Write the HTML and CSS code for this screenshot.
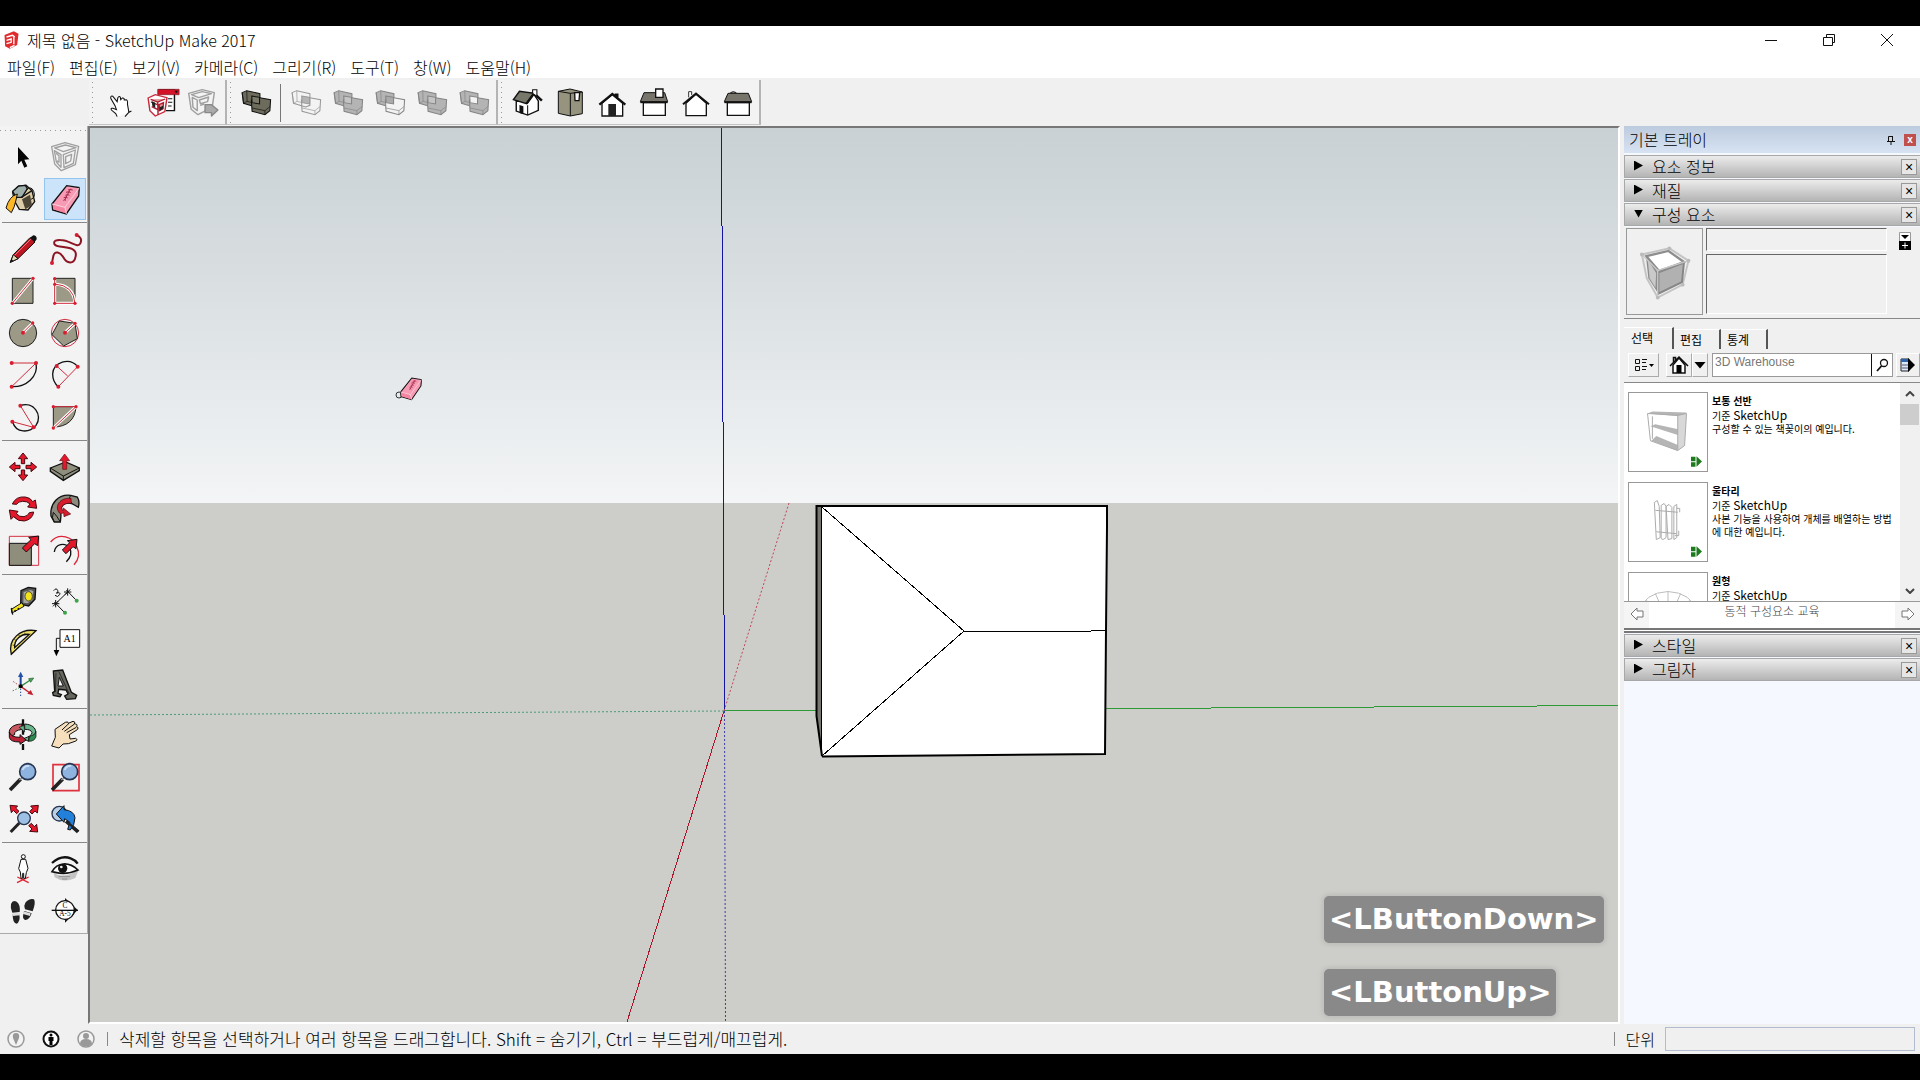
FILE: index.html
```html
<!DOCTYPE html>
<html lang="ko">
<head>
<meta charset="utf-8">
<title>제목 없음 - SketchUp Make 2017</title>
<link rel="stylesheet" href="styles.css">
</head>
<body>
<svg class="defs" width="0" height="0" aria-hidden="true">
  <symbol id="solids" viewBox="0 0 118 126" preserveAspectRatio="none">
    <path class="back" d="M20 32 33 26 70 35V70L58 75 24 64Z"/>
    <path class="edge" d="M20 32 24 64M33 26 34 58 24 64M34 58 48 62"/>
    <path class="front" d="M46 54 62 46 100 53 98 86 84 98 48 88Z"/>
    <path class="edge" d="M48 78 84 86 98 74M84 86V98"/>
    <path class="core" d="M47 42 69 46V66L48 62Z"/>
  </symbol>
  <symbol id="eraser" viewBox="150 190 94 96">
    <path d="M156 252 200 197 238 203 236 228 199 282 158 270Z" fill="#f79bb4" stroke="#111" stroke-width="4"/>
    <path d="M156 252 195 262 238 203M195 262 199 282" fill="none" stroke="#fbd3dd" stroke-width="3"/>
    <path d="M158 254 193 264 197 280 160 268Z" fill="#f4849f"/>
    <path d="M204 210q8-3 14 0M198 217q10-4 14 1M196 226q8-5 12 0M191 233q8-4 12 1M190 241q5-3 8 0M212 206l-18 34" fill="none" stroke="#a02848" stroke-width="3"/>
  </symbol>
  <symbol id="lens" viewBox="26 184 88 92">
    <path d="M30 270 62 237" stroke="#222" stroke-width="11"/>
    <path d="M58 240 68 231" stroke="#999" stroke-width="5"/>
    <circle cx="83" cy="215" r="24" fill="#8fb3df" stroke="#26344f" stroke-width="5"/>
    <path d="M68 210q5-14 20-12" fill="none" stroke="#cfe0f6" stroke-width="5"/>
  </symbol>
  <symbol id="insert" viewBox="0 0 32 32">
    <path d="M0 2h13v13H0zM0 18h13v13H0zM16 1 32 16 16 31Z" fill="#1e7a1e"/>
  </symbol>
</svg>

<header class="titlebar">
  <svg class="app-icon" viewBox="0 0 46 54"><path d="M2 12 30 1 44 8 40 42 18 53 4 46Z" fill="#e02a2c"/><path d="M8 18 26 13 33 18M30 18V40M8 28 22 24 22 34 8 38M18 50 32 43" fill="none" stroke="#fff" stroke-width="4"/></svg>
  <h1>제목 없음 - SketchUp Make 2017</h1>
  <div class="window-buttons">
    <button aria-label="최소화"><svg viewBox="0 0 14 14"><path d="M1 7.500h12"/></svg></button>
    <button aria-label="이전 크기로"><svg viewBox="0 0 14 14"><path d="M1.500 4.500h9v8h-9zM4.500 4V1.500h8v8H11"/></svg></button>
    <button aria-label="닫기"><svg viewBox="0 0 14 14"><path d="M1 1l12 12M13 1 1 13"/></svg></button>
  </div>
</header>

<nav class="menubar">
  <button>파일(F)</button><button>편집(E)</button><button>보기(V)</button><button>카메라(C)</button><button>그리기(R)</button><button>도구(T)</button><button>창(W)</button><button>도움말(H)</button>
</nav>

<div class="top-tools">
  <div class="bar">
    <button class="tool" aria-label="상호 작용"><svg viewBox="277 186 118 126" preserveAspectRatio="none"><path d="M328 290 324 281 312 270q-3-7 4-5l10 4-4-12-12-22q-1-9 6-6l12 16 2-12q4-6 7-1l1 7 5-5q5-1 5 6l6-1q4 2 3 14l4 24M350 290l10-12 8-5" fill="#fff" stroke="#111" stroke-width="3"/></svg></button>
    <button class="tool" aria-label="구성요소 옵션"><svg viewBox="394 186 118 126" preserveAspectRatio="none"><path d="M444 210h44v62h-24" fill="#fff" stroke="#111" stroke-width="4"/><path d="M470 236h12M470 247h12M470 258h10" stroke="#111" stroke-width="3"/><path d="M441 208h60v16h-60z" fill="#d41228" stroke="#7d1522" stroke-width="2"/><path d="M488 212h10l-5 8z" fill="#111"/><path d="M414 234 434 224 467 233 461 275 434 288 419 272Z" fill="#fff" stroke="#c8283a" stroke-width="4"/><path d="M421 238 441 246 462 237M441 246l1 38M422 246l18 8M424 260l16 8M445 254l12-6-1 18-10 6z" fill="#d99" stroke="#b01c30" stroke-width="4"/><path d="M424 243l10 5v16l-8-5zM446 262l10-5v10l-9 5z" fill="#222"/></svg></button>
    <button class="tool" aria-label="구성요소 속성"><svg class="gray" viewBox="512 186 118 126" preserveAspectRatio="none"><path d="M528 220 566 209 600 218 594 262 554 284 535 268Z"/><path d="M536 224 556 233 592 221 566 215ZM538 232l14 8v32l-12-10zM558 240l26-9-3 14-20 6zM560 256l12-4"/><path class="solid" d="M574 254h18l18 16-18 18v-10h-18z"/></svg></button>
  </div>
  <div class="bar solid-bar">
    <button class="tool" aria-label="외부 쉘"><svg class="solids shell"><use href="#solids"/></svg></button>
    <span class="rule"></span>
    <button class="tool" aria-label="교차"><svg class="solids hollow"><use href="#solids"/></svg></button>
    <button class="tool" aria-label="결합"><svg class="solids"><use href="#solids"/></svg></button>
    <button class="tool" aria-label="빼기"><svg class="solids cut"><use href="#solids"/></svg></button>
    <button class="tool" aria-label="잘라내기"><svg class="solids"><use href="#solids"/></svg></button>
    <button class="tool" aria-label="분할"><svg class="solids split"><use href="#solids"/></svg></button>
  </div>
  <div class="bar">
    <button class="tool" aria-label="등각"><svg viewBox="1420 186 118 126" preserveAspectRatio="none"><path d="M1446 243v30l32 12 30-14v-28l-16-26-18 28Z" fill="#fff" stroke="#111" stroke-width="4"/><path d="M1438 239 1455 214 1496 220 1475 251Z" fill="#77776a" stroke="#111" stroke-width="4"/><path d="M1475 251 1496 220 1518 242" fill="none" stroke="#111" stroke-width="7"/><path d="M1455 279v-24l11 4v24z" fill="#111"/><path d="M1492 209h12v20l-12-9z" fill="#fff" stroke="#111" stroke-width="3"/><path d="M1478 256v29" stroke="#111" stroke-width="3"/></svg></button>
    <button class="tool" aria-label="위"><svg viewBox="27 36 126 126"><path d="M55 64 90 57 127 66V131L91 138 55 130Z" fill="#96937e" stroke="#111" stroke-width="3"/><path d="M55 64 91 70 127 66M91 70V138" fill="none" stroke="#111" stroke-width="3"/><path d="M104 68h15l-2 24h-12z" fill="#fff" stroke="#111" stroke-width="4"/></svg></button>
    <button class="tool" aria-label="앞면"><svg viewBox="153 36 126 126"><path d="M186 100V138H248V100L217 73Z" fill="#fff" stroke="#111" stroke-width="4"/><path d="M178 104 217 72 256 104M224 74h8v8" fill="none" stroke="#111" stroke-width="7"/><path d="M205 102h23v36h-23z" fill="#222"/></svg></button>
    <button class="tool" aria-label="오른쪽"><svg viewBox="279 36 126 126"><path d="M310 98h66v38h-66z" fill="#fff" stroke="#111" stroke-width="4"/><path d="M301 95 312 68H374L383 95Z" fill="#77746b" stroke="#111" stroke-width="3"/><path d="M301 97h82" stroke="#111" stroke-width="5"/><path d="M347 57h22v25h-22z" fill="#fff" stroke="#111" stroke-width="4"/></svg></button>
    <button class="tool" aria-label="뒷면"><svg viewBox="405 36 126 126"><path d="M446 82V65h9v10" fill="#fff" stroke="#333" stroke-width="3"/><path d="M438 100V137H499V100L468 72Z" fill="#fff" stroke="#111" stroke-width="4"/><path d="M429 103 468 71 507 103" fill="none" stroke="#111" stroke-width="6"/></svg></button>
    <button class="tool" aria-label="왼쪽"><svg viewBox="531 36 126 126"><path d="M571 68q9-6 18 0" fill="#777" stroke="#222" stroke-width="3"/><path d="M562 98h66v38h-66z" fill="#fff" stroke="#111" stroke-width="4"/><path d="M553 95 564 70H625L635 95Z" fill="#77746b" stroke="#111" stroke-width="3"/><path d="M553 97h82" stroke="#111" stroke-width="5"/></svg></button>
  </div>
</div>

<main class="workspace">
  <aside class="side-tools">
    <div class="palette">
      <div class="group">
        <button class="tool" aria-label="선택"><svg viewBox="6 48 126 126"><path d="M54 81V133L64 122 73 143 82 139 73 119 88 118Z" fill="#050505"/></svg></button>
        <button class="tool" aria-label="구성요소 만들기"><svg class="gray" viewBox="132 48 126 126"><path d="M155 80 195 68 236 79 226 134 184 152 164 132Z"/><path d="M164 84 190 95 228 83 196 75ZM163 92l20 12v38l-14-16zM190 104l36-14-6 40-28 13zM197 110l18-7-3 20-15 8zM168 100l9 7v20l-6-5"/></svg></button>
        <button class="tool" aria-label="페인트통"><svg viewBox="6 174 126 126"><path d="M38 218 54 200 78 196 96 212 104 245 84 270 58 268 44 244Z" fill="#dccda8" stroke="#111" stroke-width="4"/><path d="M66 238 76 268 96 256 90 224Z" fill="#4c4435"/><path d="M38 214 56 198 76 196 82 206 66 232 48 232Z" fill="#9fb0ac" stroke="#111" stroke-width="4"/><path d="M64 232 96 212" stroke="#111" stroke-width="4"/><path d="M78 210q16-14 23 4t-8 24" fill="none" stroke="#111" stroke-width="3"/><path d="M52 222Q28 228 18 264L34 278Q44 262 48 240Z" fill="#fdb827" stroke="#111" stroke-width="3"/></svg></button>
        <button class="tool active" aria-label="지우개"><svg viewBox="132 174 126 126"><use href="#eraser" x="150" y="190" width="94" height="96"/></svg></button>
      </div>
      <div class="group">
        <button class="tool" aria-label="선"><svg viewBox="6 324 126 126"><path d="M31 427 40 404 90 353 105 366 54 416Z" fill="#be1622" stroke="#111" stroke-width="3"/><path d="M31 427 40 404 54 416Z" fill="#e6d6b4" stroke="#111" stroke-width="3"/><path d="M31 427l3-10 6 5zM90 353l10-7q11 1 10 12l-6 8z" fill="#111"/><path d="M44 406 92 358" stroke="#f0787d" stroke-width="3"/></svg></button>
        <button class="tool" aria-label="자유형"><svg class="red-dots" viewBox="132 324 126 126"><path d="M229 345q20 8 12 25c-8 17-30-10-60-10-26-1-22 16-5 19 22 3 57 3 51 30-5 26-27 22-37 3-9-15-26-22-30-4l-4 20" fill="none" stroke="#8d1523" stroke-width="6"/><circle cx="230" cy="345" r="6"/><circle cx="156" cy="429" r="6"/></svg></button>
        <button class="tool" aria-label="직사각형"><svg class="red-dots" viewBox="6 450 126 126"><path class="face" d="M37 475h62v75H37z"/><path class="white-line" d="M37 550 99 475"/><path class="red-line" d="M37 550 99 475"/><circle cx="99" cy="475" r="5"/><circle cx="37" cy="550" r="5"/></svg></button>
        <button class="tool" aria-label="회전 직사각형"><svg class="red-dots" viewBox="132 450 126 126"><path class="face" d="M164 475h61v75h-61z"/><path class="white-line" d="M164 478v72h61q-4-54-61-58"/><path class="red-line" d="M164 478v72h61q-4-54-61-58"/><circle cx="164" cy="476" r="5"/><circle cx="164" cy="493" r="5"/><circle cx="164" cy="550" r="5"/><circle cx="225" cy="550" r="5"/></svg></button>
        <button class="tool" aria-label="원"><svg class="red-dots" viewBox="6 576 126 126"><circle class="disc" cx="69" cy="639" r="41"/><path class="white-line" d="M69 638 98 609"/><path class="red-line" d="M69 638 98 609"/><circle cx="69" cy="638" r="6"/><circle cx="98" cy="609" r="5"/></svg></button>
        <button class="tool" aria-label="다각형"><svg class="red-dots" viewBox="132 576 126 126"><circle class="red-ring" cx="195" cy="639" r="41"/><path class="face" d="M178 603 225 610 232 656 191 678 156 644Z"/><path class="white-line" d="M195 638 225 610"/><path class="red-line" d="M195 638 225 610"/><circle cx="195" cy="638" r="6"/><circle cx="225" cy="610" r="5"/></svg></button>
        <button class="tool" aria-label="호"><svg class="red-dots" viewBox="6 702 126 126"><path class="arc" d="M108 729C116 770 78 802 35 800"/><path class="red-line" d="M35 729H108L35 800"/><circle cx="35" cy="729" r="6"/><circle cx="108" cy="729" r="6"/><circle cx="35" cy="800" r="6"/></svg></button>
        <button class="tool" aria-label="2점 호"><svg class="red-dots" viewBox="132 702 126 126"><path class="arc" d="M233 740C208 710 160 727 158 762Q158 786 175 800"/><path class="red-line" d="M175 800 233 740M170 738 203 768"/><circle cx="233" cy="740" r="6"/><circle cx="170" cy="738" r="6"/><circle cx="175" cy="800" r="6"/></svg></button>
        <button class="tool" aria-label="3점 호"><svg class="red-dots" viewBox="6 828 126 126"><path class="arc" d="M61 857C100 842 130 886 108 916C88 940 48 940 38 906"/><path class="red-line" d="M61 857 101 922 37 905"/><circle cx="61" cy="857" r="6"/><circle cx="101" cy="922" r="6"/><circle cx="37" cy="905" r="6"/></svg></button>
        <button class="tool" aria-label="원형 차트"><svg class="red-dots" viewBox="132 828 126 126"><path class="face" d="M160 860H228C226 900 200 921 160 921Z"/><path class="white-line" d="M160 924 228 860"/><path class="red-line" d="M160 860H228L160 924"/><circle cx="160" cy="860" r="5"/><circle cx="228" cy="860" r="5"/><circle cx="160" cy="924" r="5"/></svg></button>
      </div>
      <div class="group">
        <button class="tool" aria-label="이동"><svg class="red-solid" viewBox="6 48 126 126"><path d="M69 69 83 86H74V101H64V86H55ZM69 152 83 135H74V120H64V135H55ZM28 111 45 97V106H60V116H45V125ZM110 111 93 97V106H78V116H93V125Z"/></svg></button>
        <button class="tool" aria-label="밀기/끌기"><svg viewBox="132 48 126 126"><path d="M151 114 197 96 238 114V122L190 151 151 124Z" fill="#8f8e7c" stroke="#111" stroke-width="4"/><path d="M151 114 190 138 238 114M190 138v13" fill="none" stroke="#111" stroke-width="3"/><path d="M194 72 209 92H200V118H188V92H179Z" fill="#e5182b" stroke="#5e1018" stroke-width="2"/></svg></button>
        <button class="tool" aria-label="회전"><svg class="red-solid" viewBox="6 174 126 126"><path d="M37 222Q48 198 76 201 92 203 98 215L106 210 110 235 83 231 90 222Q82 213 68 214 54 214 50 223ZM101 246Q98 268 73 273 54 275 41 260L33 268 28 240 54 244 49 251Q58 262 72 260 84 258 88 248Z"/></svg></button>
        <button class="tool" aria-label="따라가기"><svg viewBox="132 174 126 126"><path d="M153 258C149 219 176 192 212 196L232 201Q240 214 235 232L218 222C192 212 176 230 183 256L181 276 163 276Z" fill="#8b8a7d" stroke="#111" stroke-width="4"/><path d="M163 276Q153 264 160 247 170 256 181 276M212 196q-10 14 6 26" fill="none" stroke="#111" stroke-width="3"/><path d="M213 205C172 202 162 238 182 252L191 248 192 260 212 252 190 234 188 242C178 226 198 218 214 220Z" fill="#d51d2d" stroke="#4a0c12" stroke-width="2"/></svg></button>
        <button class="tool" aria-label="배율"><svg viewBox="6 300 126 126"><path d="M28 319h88v87H28z" fill="none" stroke="#d43243" stroke-width="3"/><path d="M28 340h66v66H28z" fill="#8f8e7c" stroke="#111" stroke-width="3"/><path d="M116 318 113 347 104 341 79 366 67 354 93 329 86 322Z" fill="#e5182b" stroke="#111" stroke-width="3"/></svg></button>
        <button class="tool" aria-label="오프셋"><svg viewBox="132 300 126 126"><path d="M152 336C177 306 220 320 230 350Q245 380 222 404" fill="none" stroke="#dc2436" stroke-width="4"/><path d="M163 366C166 341 195 336 209 354Q220 374 199 395" fill="none" stroke="#111" stroke-width="4"/><path d="M231 328 228 356 219 350 198 371 187 360 209 338 202 332Z" fill="#e5182b" stroke="#111" stroke-width="3"/></svg></button>
      </div>
      <div class="group">
        <button class="tool" aria-label="줄자"><svg viewBox="6 450 126 126"><path d="M63 482 85 472 107 475 105 508 86 528 62 523Z" fill="#555" stroke="#111" stroke-width="4"/><path d="M71 486 92 480 100 484 97 510 82 520 70 518Z" fill="#a8a8a0"/><ellipse cx="86" cy="499" rx="11" ry="14" fill="#f4e21c" stroke="#111" stroke-width="2"/><path d="M66 518 34 538 36 549 72 529Z" fill="#f4e21c" stroke="#111" stroke-width="3"/><path d="M34 534l4 20M44 540l3 5M54 534l3 5" stroke="#111" stroke-width="4"/></svg></button>
        <button class="tool" aria-label="치수"><svg viewBox="132 450 126 126"><path d="M167 521 203 486M163 516 194 548M199 480 230 512M156 521h22M192 486h22M167 510v22M203 475v22M159 529l16-16M195 494l16-16" fill="none" stroke="#111" stroke-width="3"/><path d="M161 482q8-10 12-1t-4 8q14-3 10 5-6 10-14 2" fill="none" stroke="#111" stroke-width="3"/><circle cx="230" cy="512" r="6" fill="#3fa34a"/><circle cx="195" cy="548" r="6" fill="#3fa34a"/></svg></button>
        <button class="tool" aria-label="각도기"><svg viewBox="6 576 126 126"><path fill-rule="evenodd" d="M34 673C22 628 62 594 108 602ZM44 653C42 628 64 610 88 613Z" fill="#f0df6a" stroke="#111" stroke-width="4"/><path d="M38 645l8 2M43 628l8 5M56 615l5 6M74 608l2 6M34 673 60 646" stroke="#111" stroke-width="2"/></svg></button>
        <button class="tool" aria-label="텍스트"><svg viewBox="132 576 126 126"><path d="M180 599h59v53h-59z" fill="#fff" stroke="#111" stroke-width="3"/><path d="M180 625H169V662" fill="none" stroke="#111" stroke-width="3"/><path d="M161 660h17l-9 19z"/><text class="serif-label" x="209" y="635">A1</text></svg></button>
        <button class="tool" aria-label="축"><svg viewBox="6 702 126 126"><path d="M62 769 91 750" stroke="#2f8b3e" stroke-width="4"/><path d="M101 744 86 746 92 757Z" fill="#49a355" stroke="#1e5c29" stroke-width="2"/><path d="M62 769V739" stroke="#1e4699" stroke-width="6"/><path d="M62 725 54 741H70Z" fill="#2453ae"/><path d="M62 769 90 789" stroke="#c2202f" stroke-width="4"/><path d="M100 796 82 791 92 780Z" fill="#c2202f"/><path d="M58 767 36 752" stroke="#a23a48" stroke-width="3" stroke-dasharray="4 5"/><path d="M58 773 35 784" stroke="#3c8449" stroke-width="3" stroke-dasharray="4 5"/><path d="M62 776V802" stroke="#1e4699" stroke-width="3" stroke-dasharray="4 5"/><circle cx="62" cy="769" r="6"/></svg></button>
        <button class="tool" aria-label="3D 텍스트"><svg viewBox="132 702 126 126"><path d="M160 723 188 720 214 787 230 796 226 806 200 808 194 798 204 792 198 780 176 778 174 790 184 794 180 800 160 796 158 788 164 784Z" fill="#66685f" stroke="#111" stroke-width="4"/><path d="M178 742 190 768H174Z" fill="#f3f3f3" stroke="#111" stroke-width="3"/><path d="M176 724 208 792M168 728 166 786" stroke="#111" stroke-width="2"/></svg></button>
      </div>
      <div class="group">
        <button class="tool" aria-label="궤도"><svg viewBox="6 42 126 126"><path d="M66 72C34 72 20 92 32 108L44 104Q40 92 66 88Z" fill="#c75860" stroke="#111" stroke-width="3"/><path d="M74 72C112 74 118 106 86 112V124L70 116Q96 108 96 98 94 88 74 88Z" fill="#68b48b" stroke="#111" stroke-width="3"/><path d="M28 96Q32 112 60 112V104L78 120 60 133V126Q30 126 28 112Z" fill="#ba2237" stroke="#111" stroke-width="3"/><path d="M90 108q16-2 18-14v16q-4 14-22 14z" fill="#2d8a50" stroke="#111" stroke-width="2"/><path d="M69 58V104M69 132V150" stroke="#111" stroke-width="7"/><path d="M58 82 72 76 74 96Z" fill="#68b48b" stroke="#111" stroke-width="2"/></svg></button>
        <button class="tool" aria-label="이동 보기"><svg viewBox="132 42 126 126"><path d="M155 138 166 112 165 88 196 67q9-4 9 3l14-6q9 1 4 8 11-1 7 8 8 2 2 9L208 104l2 13 17-2q9 5-2 9l-20 7-16 1-12 12Z" fill="#f6dfbd" stroke="#111" stroke-width="3"/><path d="M186 90 207 70M193 94 222 73M200 98 229 82" fill="none" stroke="#111" stroke-width="3"/></svg></button>
        <button class="tool" aria-label="확대/축소"><svg viewBox="6 168 126 126"><use href="#lens" x="26" y="184" width="88" height="92"/></svg></button>
        <button class="tool" aria-label="확대/축소 창"><svg viewBox="132 168 126 126"><path d="M159 194h78v78h-78z" fill="none" stroke="#e0313f" stroke-width="5"/><use href="#lens" x="152" y="184" width="88" height="92"/></svg></button>
        <button class="tool" aria-label="범위 확대/축소"><svg viewBox="6 294 126 126"><g class="red-solid"><path d="M30 316 53 318 47 324 57 334 50 341 40 331 34 338ZM115 316 112 339 105 333 96 342 89 335 98 325 92 318ZM113 396 89 394 96 387 86 377 94 370 103 380 110 373Z"/></g><path d="M32 396 58 369" stroke="#222" stroke-width="9"/><circle cx="72" cy="355" r="19" fill="#9dc0e4" stroke="#26344f" stroke-width="4"/></svg></button>
        <button class="tool" aria-label="이전 보기"><svg viewBox="132 294 126 126"><circle cx="178" cy="341" r="22" fill="#b9cfe6" stroke="#26344f" stroke-width="4"/><path d="M198 364 234 396" stroke="#222" stroke-width="10"/><path d="M169 342 192 317V329Q222 332 225 353 224 376 211 390L203 388 210 367 194 356 192 367Z" fill="#2380da" stroke="#111" stroke-width="3"/><path d="M206 370 236 394" stroke="#222" stroke-width="7"/></svg></button>
      </div>
      <div class="group">
        <button class="tool" aria-label="카메라 배치"><svg viewBox="6 444 126 126"><path d="M51 548 86 531M52 531 86 548" stroke="#e0202d" stroke-width="4"/><circle cx="70" cy="470" r="6" fill="#fff" stroke="#111" stroke-width="3"/><path d="M63 478H77L84 505 79 518 76 535H71V520H68V535H63L61 516 56 506Z" fill="#fff" stroke="#111" stroke-width="3"/></svg></button>
        <button class="tool" aria-label="둘러보기"><svg viewBox="132 444 126 126"><path d="M160 516Q184 540 236 510L226 534Q190 550 164 532Z" fill="#c4c4c4"/><path d="M156 489Q184 464 212 475 226 480 233 491" fill="none" stroke="#111" stroke-width="7"/><path d="M156 515C172 486 206 484 234 510Q198 526 166 517Z" fill="#fff" stroke="#111" stroke-width="5"/><circle cx="188" cy="505" r="14" fill="#111"/><circle cx="184" cy="501" r="4" fill="#eee"/><path d="M176 530h34M186 537h16" stroke="#777" stroke-width="2"/></svg></button>
        <button class="tool" aria-label="걸어다니기"><svg viewBox="6 570 126 126"><path d="M33 612Q38 598 50 605 62 614 59 636L37 638Q30 626 33 612ZM38 643 58 641Q62 666 49 671 38 670 38 643ZM76 608Q88 594 102 598 108 608 98 634L75 628Q70 618 76 608ZM73 633 95 640Q88 661 75 660 64 654 73 633Z" fill="#222"/><path d="M38 640 60 638 60 646 38 648ZM70 634 92 640 90 648 69 642Z" fill="#ddd"/></svg></button>
        <button class="tool" aria-label="단면 평면"><svg viewBox="132 570 126 126"><path d="M195 594 233 630 195 668Z" fill="#111"/><circle cx="195" cy="630" r="28" fill="#fff" stroke="#111" stroke-width="4"/><path d="M155 631H234" stroke="#111" stroke-width="4"/><text class="serif-label small" x="195" y="625">C</text><text class="serif-label small" x="195" y="649">A-5</text></svg></button>
      </div>
    </div>
  </aside>

  <section class="viewport">
    <svg class="scene" viewBox="90 128 1528 894" preserveAspectRatio="xMidYMid slice">
      <defs><linearGradient id="sky" x1="0" y1="0" x2="0" y2="1"><stop offset="0" stop-color="#c9d1d4"/><stop offset=".5" stop-color="#dde2e4"/><stop offset="1" stop-color="#f3f5f6"/></linearGradient></defs>
      <path d="M90 128h1528v375H90z" fill="url(#sky)"/>
      <path d="M90 503h1528v519H90z" fill="#cdcec9"/>
      <g class="axes">
        <path d="M721.500 128 724.500 711" stroke="#1414a0"/>
        <path d="M724 711 627 1022" stroke="#b01428"/>
        <path d="M724 711 1618 705.500" stroke="#2e9a36"/>
      </g>
      <g class="dotted-axes">
        <path d="M724.500 711 725.500 1022" stroke="#3c3ca8"/>
        <path d="M724 711 789 503" stroke="#c04656"/>
        <path d="M724 711 90 715" stroke="#4c9a80"/>
      </g>
      <path d="M817 506H1107L1105 754 822 756.500 816 716Z" fill="#fff"/>
      <path d="M817 506h5v248l-6-38z" fill="#77776f"/>
      <g fill="none" stroke="#000">
        <path d="M822 756 816.500 716V506H1107V527L1106 630 1105 754 822 756.500" stroke-width="2"/>
        <path class="crisp" d="M821.500 506V756M822 507 964 631 822 756M964 631.500 1078 631.500 1105 630.500"/>
      </g>
      <circle cx="399" cy="395" r="3" fill="none" stroke="#333"/>
      <use href="#eraser" x="399" y="376" width="24" height="25"/>
    </svg>
    <div class="keys"><kbd>&lt;LButtonDown&gt;</kbd><kbd>&lt;LButtonUp&gt;</kbd></div>
  </section>

  <aside class="tray">
    <div class="tray-title"><h2>기본 트레이</h2>
      <button class="pin" aria-label="고정"><svg viewBox="0 0 8 10"><path d="M1.500 6V1.500h4V6M0 6.500h8M4 6v4M5.500 1v5.500" fill="none" stroke="#111"/></svg></button>
      <button class="shut" aria-label="트레이 닫기">x</button></div>
    <div class="panel-head"><button class="fold"><i class="tri"></i>요소 정보</button><button class="x" aria-label="닫기">×</button></div>
    <div class="panel-head"><button class="fold"><i class="tri"></i>재질</button><button class="x" aria-label="닫기">×</button></div>
    <div class="panel-head"><button class="fold"><i class="tri open"></i>구성 요소</button><button class="x" aria-label="닫기">×</button></div>
    <div class="component">
      <div class="preview"><svg viewBox="80 395 170 175"><path d="M92 427 177 408 236 446 218 520 141 560 107 500Z" fill="#eee" stroke="#c4c4c4" stroke-width="6"/><path d="M104 428 143 484 143 548 112 500Z" fill="#8d8d8d"/><path d="M110 442 136 484 134 530 116 500Z" fill="#c9c9c9"/><path d="M143 482 222 452 216 512 143 548Z" fill="#b1b1b1" stroke="#858585" stroke-width="6"/><path d="M106 432 174 416 222 450 145 478Z" fill="#fff" stroke="#8d8d8d" stroke-width="7"/><path d="M92 427 141 476 236 446M141 476V560" fill="none" stroke="#c9c9c9" stroke-width="4"/><g fill="#bbb"><circle cx="92" cy="427" r="6"/><circle cx="177" cy="408" r="6"/><circle cx="236" cy="446" r="6"/><circle cx="218" cy="520" r="6"/><circle cx="141" cy="560" r="6"/></g></svg></div>
      <div class="fields"><input type="text" aria-label="이름"><textarea aria-label="설명"></textarea></div>
      <button class="more" aria-label="보조 선택 창"><svg viewBox="0 0 12 18"><path d="M.5.5h11v9H.5z" fill="#fff" stroke="#999"/><path d="M2 3h8L6 7z"/><path d="M0 9h12v9H0z"/><path d="M3 13.500h6M6 10.500v6" stroke="#fff"/></svg></button>
    </div>
    <div class="tabs"><button class="on">선택</button><button>편집</button><button>통계</button></div>
    <div class="search">
      <button class="raised view" aria-label="보기 옵션"><svg viewBox="0 0 20 16"><path d="M1.500 2.500h4v4h-4zM1.500 9.500h4v4h-4zM8 2.500h5M8 5.500h4M8 9.500h5M8 12.500h4" fill="none" stroke="#111"/><path d="M15 7h5l-2.500 3z"/></svg></button>
      <button class="raised home" aria-label="모델에서"><svg viewBox="0 0 20 20"><path d="M4 10v8h12v-8L10 3z" fill="#fff" stroke="#111" stroke-width="1.500"/><path d="M1 11 10 2l9 9M4.500 7V2.500h2V5" fill="none" stroke="#111" stroke-width="1.500"/><path d="M7.500 10h5v8h-5z"/></svg></button>
      <button class="raised drop" aria-label="탐색"><i class="tri open"></i></button>
      <div class="search-box"><input type="text" placeholder="3D Warehouse" aria-label="검색"><button aria-label="찾기"><svg viewBox="0 0 14 14"><circle cx="9" cy="5" r="3.500" fill="none" stroke="#111" stroke-width="1.300"/><path d="M6.500 8 2 13" stroke="#111" stroke-width="1.800"/></svg></button></div>
      <button class="raised detail" aria-label="세부 정보"><svg viewBox="0 0 16 16"><path d="M1 2h8v12H1z" fill="#dce8f6" stroke="#222"/><path d="M1 2h8v3H1z" fill="#2d65b0"/><path d="M2 8h6M2 11h6" stroke="#557"/><path d="M8 1 15 8 8 15z"/></svg></button>
    </div>
    <div class="list">
      <ul>
        <li><div class="thumb"><svg viewBox="0 0 80 80"><path d="M19 21 24 19 59 20 56 24ZM22 34 27 32 54 38 50 43ZM23 49 28 44 52 54 49 59Z" fill="#b5b5b5"/><path d="M50 23 59 21 57 54 50 59Z" fill="#d8d8d8"/><path d="M19 21 50 23 50 59 22 49ZM50 23 59 21 57 54 50 59M24 24V47" fill="none" stroke="#aaa"/></svg><svg class="dyn"><use href="#insert"/></svg></div><div><h3>보통 선반</h3><p>기준 <span>SketchUp</span></p><p>구성할 수 있는 책꽂이의 예입니다.</p></div></li>
        <li><div class="thumb"><svg viewBox="0 0 80 80"><path d="M28 58 26 20 29 18 31 24 32 56 28 58M33 57V23l3-2 2 3v32l-3 2zM40 58 38 24l3-2 3 3v32zM46 58V24l3-2v34l-3 2M27 28l23 2M28 50l21 2M47 54h4v-5M49 26h3v4" fill="none" stroke="#aaa"/></svg><svg class="dyn"><use href="#insert"/></svg></div><div><h3>울타리</h3><p>기준 <span>SketchUp</span></p><p>사본 기능을 사용하여 개체를 배열하는 방법에 대한 예입니다.</p></div></li>
        <li><div class="thumb"><svg viewBox="0 0 80 80"><path d="M10 40Q16 20 40 19 64 20 70 40M40 19V40M27 21 40 50 53 21M18 28 40 50 62 28" fill="none" stroke="#bbb"/></svg></div><div><h3>원형</h3><p>기준 <span>SketchUp</span></p></div></li>
      </ul>
      <div class="scroll"><button aria-label="위로"><svg viewBox="0 0 10 6"><path d="M1 5 5 1l4 4"/></svg></button><i class="grab"></i><button class="down" aria-label="아래로"><svg viewBox="0 0 10 6"><path d="M1 1l4 4 4-4"/></svg></button></div>
    </div>
    <div class="pager"><button aria-label="이전"><svg viewBox="0 0 14 14"><path d="M1 7 7 1v3h6v6H7v3z"/></svg></button><a href="#">동적 구성요소 교육</a><button aria-label="다음"><svg viewBox="0 0 14 14"><path d="M13 7 7 1v3H1v6h6v3z"/></svg></button></div>
    <div class="panel-head"><button class="fold"><i class="tri"></i>스타일</button><button class="x" aria-label="닫기">×</button></div>
    <div class="panel-head"><button class="fold"><i class="tri"></i>그림자</button><button class="x" aria-label="닫기">×</button></div>
  </aside>
</main>

<footer class="status">
  <button aria-label="위치"><svg viewBox="0 0 18 18"><circle cx="9" cy="9" r="8" fill="#f3f3f3" stroke="#999" stroke-width="1.500"/><path d="M9 15 6 8q-1-5 3-5t3 5z" fill="#999"/></svg></button>
  <button aria-label="크레딧"><svg viewBox="0 0 18 18"><circle cx="9" cy="9" r="7.500" fill="#fff" stroke="#111" stroke-width="2"/><circle cx="9" cy="5" r="1.500"/><path d="M6.500 7h5v4H10.500v4h-3v-4h-1z"/></svg></button>
  <button aria-label="로그인"><svg viewBox="0 0 18 18"><circle cx="9" cy="9" r="8" fill="#f3f3f3" stroke="#999" stroke-width="1.500"/><circle cx="9" cy="6" r="3" fill="#999"/><path d="M3 14q0-5 6-5t6 5q-6 5-12 0" fill="#999"/></svg></button>
  <i class="bar-line"></i>
  <p>삭제할 항목을 선택하거나 여러 항목을 드래그합니다. Shift = 숨기기, Ctrl = 부드럽게/매끄럽게.</p>
  <i class="bar-line"></i>
  <label for="units">단위</label><input id="units" type="text">
</footer>
</body>
</html>
```
FILE: styles.css
```css
* { box-sizing: border-box; margin: 0; padding: 0; }
body { display: flex; flex-direction: column; min-height: 100vh; padding: 26px 0; background: #000; color: #000; font: 300 16px/20px "Noto Sans CJK KR", sans-serif; }
button { border: 0; background: none; color: inherit; font: inherit; display: flex; align-items: center; justify-content: center; }
input, textarea { border: 0; background: none; font: inherit; min-width: 0; border-radius: 0; resize: none; }
.defs { position: absolute; }
h1, h2, h3 { font-weight: 300; font-size: 16px; }

.titlebar { display: flex; align-items: center; gap: 7px; height: 28px; padding: 0 4px 0 3px; background: #fff; }
.app-icon { width: 17px; height: 18px; }
.titlebar h1 { flex: 1; }
.window-buttons { display: flex; }
.window-buttons button { width: 58px; height: 28px; }
.window-buttons svg { width: 14px; height: 14px; fill: none; stroke: #111; }
.menubar { display: flex; gap: 14px; height: 24px; padding: 2px 7px 0; background: #fff; }

.top-tools { display: flex; height: 48px; padding: 2px 0 0 89px; background: #f0f0f0; }
.bar { display: flex; align-items: center; height: 45px; padding: 2px 0 0 10px; background: #f3f3f3 radial-gradient(circle, #999 1px, transparent 1px) 2px 0 / 3px 5px repeat-y; border-right: 2px solid #b4b4b4; border-bottom: 1px solid #c4c4c4; }
.bar + .bar { padding-left: 9px; }
.bar.solid-bar { padding-left: 8px; padding-right: 1px; }
.rule { width: 1px; height: 38px; margin: 0 4px 0 3px; background: #777; }
.tool { width: 42px; height: 42px; flex: none; }
.tool svg { width: 42px; height: 42px; display: block; }
.tool.active { background: #cbe4f9; border: 1px solid #94c5ef; }
.tool.active svg { margin: -1px; }

.gray path { fill: none; stroke: #a0a0a0; stroke-width: 4px; stroke-linejoin: round; }
.gray path.solid { fill: #aaa; stroke: #888; }
.solids { --fill: #b4b4b4; --line: #858585; --front: var(--fill); --core: #c4c4c4; }
.solids.shell { --fill: #6c6b5c; --line: #111; --core: #7b7a6a; }
.solids.hollow { --fill: none; --core: #b4b4b4; --line: #999; }
.solids.cut { --front: #f3f3f3; --core: #aaa; }
.solids.split { --core: #f3f3f3; }
.back { fill: var(--fill); stroke: var(--line); stroke-width: 3px; }
.front { fill: var(--front); stroke: var(--line); stroke-width: 3px; }
.core { fill: var(--core); stroke: var(--line); stroke-width: 3px; }
.edge { fill: none; stroke: var(--line); stroke-width: 2px; }
.red-dots circle { fill: #d81d30; }
.red-dots .face, .red-dots .disc { fill: #9c9a86; stroke: #222; stroke-width: 3px; }
.red-dots .red-ring { fill: none; stroke: #d22d3c; stroke-width: 3px; }
.white-line { fill: none; stroke: #fff; stroke-width: 9px; }
.red-line { fill: none; stroke: #cf2c3c; stroke-width: 3px; }
.arc { fill: none; stroke: #111; stroke-width: 4px; }
.red-solid path { fill: #e5182b; stroke: #46090f; stroke-width: 3px; }
.serif-label { font: 30px "Liberation Serif", serif; text-anchor: middle; }
.serif-label.small { font-size: 22px; }

.workspace { display: flex; flex: 1; background: #f0f0f0; }
.side-tools { width: 88px; flex: none; }
.palette { padding: 10px 0 1px 2px; background: #f3f3f3 radial-gradient(circle, #999 1px, transparent 1px) 3px 3px / 5px 3px repeat-x; border-right: 1px solid #aaa; border-bottom: 1px solid #aaa; }
.group { display: grid; grid-template-columns: 42px 42px; }
.group + .group { margin-top: 2px; padding-top: 5px; border-top: 1px solid #888; }

.viewport { flex: 1; display: flex; position: relative; min-width: 0; border: 2px solid #777; border-right-color: #fff; border-bottom-color: #fff; }
.scene { position: absolute; width: 100%; height: 100%; }
.axes { fill: none; stroke-width: 1px; shape-rendering: crispEdges; }
.dotted-axes { fill: none; stroke-width: 1px; stroke-dasharray: 2 2; }
.crisp { stroke-width: 1px; shape-rendering: crispEdges; }
.keys { position: absolute; right: 15px; bottom: 6px; width: 279px; display: flex; flex-direction: column; align-items: flex-start; gap: 26px; }
kbd { padding: 0 5px; border-radius: 5px; background: #898989; box-shadow: 0 0 4px 2px #bcbcb9; color: #fff; font: bold 29px/47px "DejaVu Sans", sans-serif; white-space: nowrap; }

.tray { width: 300px; flex: none; border-left: 4px solid #f0f0f0; background: #f5f8ff; }
.tray-title { display: flex; align-items: center; height: 27px; margin-bottom: 2px; padding: 0 4px 0 5px; background: linear-gradient(#bccbde, #d7e3f3); }
.tray-title h2 { flex: 1; padding-bottom: 2px; }
.pin svg { width: 8px; height: 10px; }
.shut { width: 12px; height: 12px; margin-left: 9px; background: #c0504d; color: #fff; font: bold 10px/12px "Liberation Sans", sans-serif; }
.panel-head { display: flex; align-items: center; height: 23px; margin-bottom: 1px; padding-right: 3px; border: 1px solid #a8a8a8; border-right: 0; background: linear-gradient(#ececec, #b4b4b4); }
.fold { flex: 1; justify-content: flex-start; gap: 9px; padding: 0 0 2px 9px; height: 21px; }
.tri { width: 9px; height: 10px; background: #000; clip-path: polygon(0 0, 100% 50%, 0 100%); }
.tri.open { height: 8px; clip-path: polygon(0 0, 100% 0, 50% 100%); }
.x { width: 16px; height: 16px; border: 1px solid #999; background: #e6e6e6; font: 14px/14px "Liberation Sans", sans-serif; }
.component { display: flex; gap: 3px; height: 92px; padding: 1px 9px 3px 2px; background: #f0f0f0; border-bottom: 1px solid #888; }
.preview { width: 77px; height: 87px; padding: 15px 11px; border: 1px solid #999; }
.preview svg { width: 55px; height: 57px; }
.fields { flex: 1; display: flex; flex-direction: column; gap: 3px; }
.fields > * { width: 100%; height: 23px; border: 1px solid #fff; border-top-color: #666; border-left-color: #666; display: block; }
.fields textarea { height: 60px; }
.more { width: 12px; height: 18px; margin: 4px 0 0 9px; }
.more svg { width: 12px; height: 18px; }
.tabs { display: flex; align-items: flex-end; height: 31px; padding-bottom: 1px; background: #f0f0f0; font-size: 12px; font-weight: 400; line-height: 18px; }
.tabs button { width: 47px; height: 20px; padding-left: 6px; justify-content: flex-start; border-right: 2px solid #555; border-top: 1px solid #fff; }
.tabs .on { width: 50px; height: 22px; padding: 0 0 2px 7px; }
.search { display: flex; height: 33px; padding: 3px 0 5px 4px; background: #f0f0f0; border-bottom: 1px solid #888; }
.raised { height: 24px; border: 1px solid #fff; border-right-color: #aaa; border-bottom-color: #aaa; }
.view { width: 31px; margin-right: 7px; }
.view svg { width: 20px; height: 16px; }
.home { width: 26px; }
.home svg { width: 20px; height: 20px; }
.drop { width: 16px; margin-right: 4px; }
.drop .tri { width: 12px; height: 7px; }
.search-box { flex: 1; display: flex; min-width: 0; border: 1px solid #999; background: #fff; }
.search-box input { flex: 1; padding: 0 2px 6px; font: 12px/16px "Liberation Sans", sans-serif; border-right: 1px solid #111; }
.search-box input::placeholder { color: #777; }
.search-box button { width: 20px; }
.search-box svg { width: 14px; height: 14px; }
.detail { width: 24px; margin-left: 3px; }
.detail svg { width: 16px; height: 16px; }
.list { display: flex; height: 219px; overflow: hidden; background: #fff; border-bottom: 1px solid #999; }
.list ul { flex: 1; padding: 9px 4px 0 4px; list-style: none; font-size: 10px; line-height: 13px; }
.list li { display: flex; gap: 4px; height: 80px; margin-bottom: 10px; }
.list li > div + div { flex: 1; padding-top: 1px; word-break: break-all; }
.list h3 { font-size: 10px; font-weight: 700; line-height: 15px; }
.list p { font-weight: 400; }
.list p span { font-size: 12px; }
.thumb { width: 80px; height: 80px; flex: none; display: grid; border: 1px solid #999; }
.thumb svg { grid-area: 1 / 1; width: 78px; height: 78px; }
.thumb .dyn { width: 11px; height: 11px; place-self: end; margin: 0 5px 4px 0; }
.scroll { width: 20px; display: flex; flex-direction: column; background: #f0f0f0; }
.scroll button { height: 21px; }
.scroll svg { width: 10px; height: 6px; fill: none; stroke: #444; stroke-width: 2px; }
.grab { width: 19px; height: 21px; background: #cdcdcd; }
.scroll .down { margin-top: auto; }
.pager { display: flex; height: 31px; margin-bottom: 1px; background: #fff; border-bottom: 5px double #777; font-size: 12px; line-height: 18px; }
.pager a { flex: 1; color: #444; text-align: center; text-decoration: none; }
.pager button { width: 25px; padding-bottom: 2px; background: #f5f5f5; }
.pager svg { width: 14px; height: 14px; fill: #fff; stroke: #777; stroke-width: 1px; }

.status { display: flex; align-items: center; height: 30px; padding: 0 5px 0 6px; background: #f0f0f0; }
.status button { width: 20px; height: 20px; margin-right: 15px; }
.status svg { width: 18px; height: 18px; }
.status p { flex: 1; font-size: 17px; }
.bar-line { width: 1px; height: 14px; margin: 0 11px 0 -4px; background: #888; }
.status input { width: 250px; height: 24px; margin-left: 10px; border: 1px solid #b2bccf; }
```
